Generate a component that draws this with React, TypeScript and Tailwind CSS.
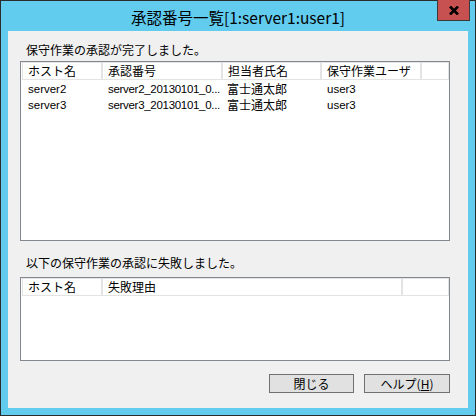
const approved = [
  { host: "server2", no: "server2_20130101_0...", person: "富士通太郎", user: "user3" },
  { host: "server3", no: "server3_20130101_0...", person: "富士通太郎", user: "user3" },
];

function HeaderCell({ label, width }: { label: string; width: string }) {
  return (
    <div className={`${width} h-[18px] shrink-0 border border-[#e3e3e3] bg-white pl-[5px] text-[12px] leading-[16px] text-black`}>
      {label}
    </div>
  );
}

export default function App() {
  return (
    <div className="w-[476px] h-[416px] border border-[#2b2b2b] bg-[#62ccef] flex flex-col px-[7px] pb-[7px] font-['Noto_Sans_CJK_JP',sans-serif]">
      {/* title bar */}
      <div className="relative h-[30px] shrink-0 flex items-center justify-center">
        <span className="text-[15.5px] leading-[20px] text-black pt-[2px]">承認番号一覧[1:server1:user1]</span>
        <div className="absolute top-[-1px] right-[-2px] w-[33px] h-[21px] bg-[#c75050] border-l border-b border-r border-[#3a3a3a] flex items-center justify-center">
          <svg width="10" height="9" viewBox="0 0 10 9">
            <path d="M1 0.5 L9 8.5 M9 0.5 L1 8.5" stroke="#000" strokeWidth="2.6" />
          </svg>
        </div>
      </div>

      {/* client area */}
      <div className="flex-1 bg-[#f0f0f0] pl-[12px] pr-[18px] flex flex-col text-[12px] text-black">
        <div className="h-[30px] pt-[11px] pl-[6px] leading-[16px]">保守作業の承認が完了しました。</div>
        <div className="h-[180px] border border-[#828790] bg-white overflow-hidden">
          <div className="flex pl-[1px]">
            <HeaderCell label="ホスト名" width="w-[80px]" />
            <HeaderCell label="承認番号" width="w-[120px]" />
            <HeaderCell label="担当者氏名" width="w-[99px]" />
            <HeaderCell label="保守作業ユーザ" width="w-[100px]" />
            <div className="flex-1 h-[18px] border border-[#e3e3e3] bg-white" />
          </div>
          <div className="flex flex-col pt-[1px]">
            {approved.map((r) => (
              <div key={r.host} className="flex h-[16px] leading-[16px] pl-[1px]">
                <div className="w-[80px] shrink-0 pl-[6px] whitespace-nowrap font-['Liberation_Sans',sans-serif] text-[11.5px]">{r.host}</div>
                <div className="w-[120px] shrink-0 pl-[6px] whitespace-nowrap font-['Liberation_Sans',sans-serif] text-[11.5px] tracking-[-0.3px]">{r.no}</div>
                <div className="w-[99px] shrink-0 pl-[5px] whitespace-nowrap">{r.person}</div>
                <div className="w-[100px] shrink-0 pl-[6px] font-['Liberation_Sans',sans-serif] text-[11.5px]">{r.user}</div>
              </div>
            ))}
          </div>
        </div>

        <div className="h-[36px] pt-[14px] pl-[6px] leading-[16px]">以下の保守作業の承認に失敗しました。</div>
        <div className="h-[84px] border border-[#828790] bg-white overflow-hidden">
          <div className="flex pl-[1px]">
            <HeaderCell label="ホスト名" width="w-[80px]" />
            <HeaderCell label="失敗理由" width="w-[300px]" />
            <div className="flex-1 h-[18px] border border-[#e3e3e3] bg-white" />
          </div>
        </div>

        <div className="flex justify-end gap-[10px] mt-[13px]">
          <button className="w-[85px] h-[19px] border border-[#707070] bg-[#e1e1e1] text-[12px] leading-[16px] text-black">
            閉じる
          </button>
          <button className="w-[86px] h-[19px] border border-[#707070] bg-[#e1e1e1] text-[12px] leading-[16px] text-black">
            ヘルプ(<span className="underline">H</span>)
          </button>
        </div>
      </div>
    </div>
  );
}
